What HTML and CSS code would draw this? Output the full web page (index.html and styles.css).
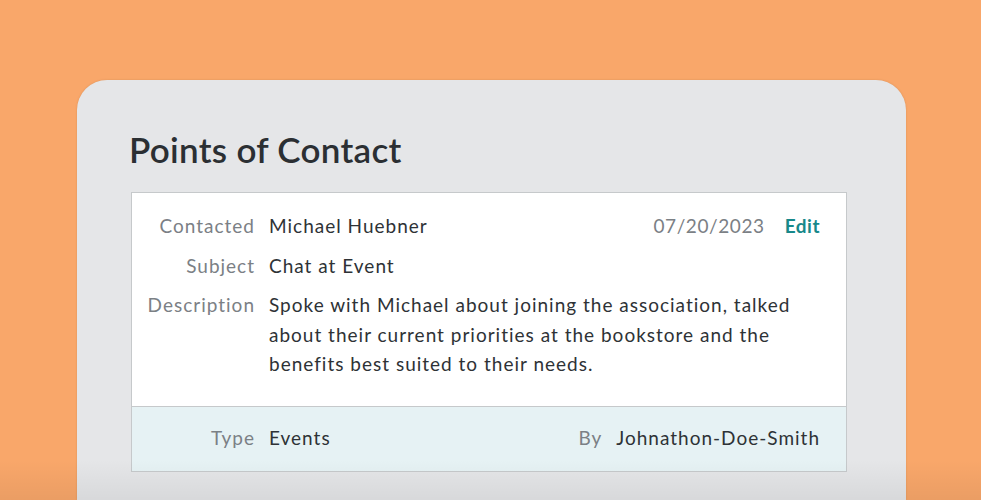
FILE: index.html
```html
<!DOCTYPE html>
<html>
<head>
<meta charset="utf-8">
<link rel="stylesheet" href="styles.css">
</head>
<body>
<div class="stage">
  <section class="card">
    <h1 class="title">Points of Contact</h1>
    <div class="contact">
      <div class="main">
        <div class="row">
          <span class="label">Contacted</span>
          <span class="value grow">Michael Huebner</span>
          <span class="date">07/20/2023</span>
          <a class="edit">Edit</a>
        </div>
        <div class="row">
          <span class="label">Subject</span>
          <span class="value">Chat at Event</span>
        </div>
        <div class="row">
          <span class="label">Description</span>
          <span class="value desc">Spoke with Michael about joining the association, talked<br>about their current priorities at the bookstore and the<br>benefits best suited to their needs.</span>
        </div>
      </div>
      <div class="footer">
        <span class="label">Type</span>
        <span class="value grow">Events</span>
        <span class="label by">By</span>
        <span class="value">Johnathon-Doe-Smith</span>
      </div>
    </div>
  </section>
</div>
</body>
</html>
```
FILE: styles.css
```css
html, body {
  margin: 0;
  padding: 0;
}
body {
  background: #f9a76a;
  font-family: "Lato", "Liberation Sans", sans-serif;
  width: 981px;
  height: 500px;
  overflow: hidden;
}
.stage {
  padding: 80px 75px 0 77px;
  position: relative;
  height: 420px;
}
.stage::after {
  content: "";
  position: absolute;
  left: 0;
  right: 0;
  bottom: 0;
  height: 40px;
  background: linear-gradient(to bottom, rgba(0,0,0,0), rgba(0,0,0,0.06));
  pointer-events: none;
}
.card {
  background: #e5e6e8;
  border-radius: 30px 30px 0 0;
  height: 420px;
  padding: 48px 59px 0 54px;
  box-sizing: border-box;
  box-shadow: 0 0 2px rgba(120, 80, 40, 0.25);
}
.title {
  margin: 0 0 22px -2px;
  font-size: 35px;
  font-weight: 600;
  color: #2b2f33;
  line-height: 42px;
  letter-spacing: 0.3px;
}
.contact {
  border: 1px solid #c6c9cb;
  background: #fff;
}
.main {
  padding: 18px 26px 27px 0;
}
.row {
  display: flex;
  align-items: flex-start;
  gap: 14px;
  line-height: 29.5px;
  margin-bottom: 10px;
}
.row:last-child {
  margin-bottom: 0;
}
.label {
  width: 123px;
  flex: none;
  text-align: right;
  color: #7b8085;
  font-size: 19px;
  letter-spacing: 1px;
}
.value {
  color: #2e3236;
  font-size: 19px;
  letter-spacing: 1px;
}
.grow {
  flex: 1;
}
.date {
  color: #7b8085;
  font-size: 19px;
  letter-spacing: 0.6px;
  margin-right: 6px;
}
.edit {
  color: #17888a;
  font-weight: 700;
  font-size: 19px;
  letter-spacing: 0.5px;
}
.footer {
  display: flex;
  align-items: center;
  gap: 14px;
  height: 65px;
  box-sizing: border-box;
  border-top: 1px solid #c6c9cb;
  background: #e6f2f4;
  padding-right: 26px;
  padding-bottom: 2px;
}
.footer .by {
  width: auto;
}
```
